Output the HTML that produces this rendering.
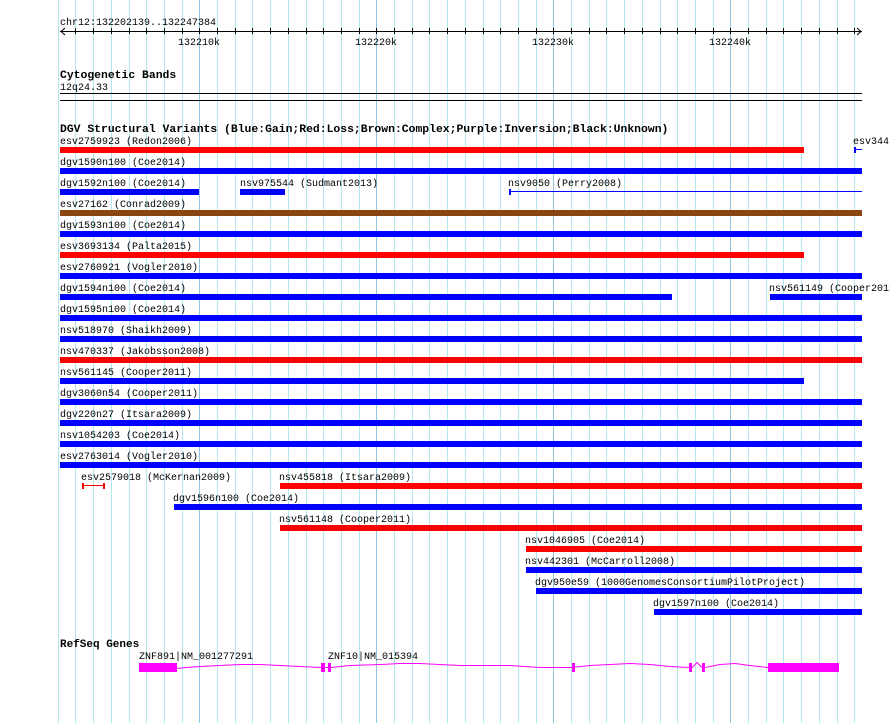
<!DOCTYPE html>
<html><head><meta charset="utf-8"><style>
html,body{margin:0;padding:0;background:#fff;}
svg{display:block}
text{font-family:"Liberation Mono",monospace;font-size:10px;fill:#000}
.b{font-weight:bold;font-size:11.4px}
</style></head><body>
<svg width="890" height="723" viewBox="0 0 890 723" xmlns="http://www.w3.org/2000/svg" shape-rendering="crispEdges">
<path stroke="#b0e8ee" stroke-width="1" fill="none" d="M58.5 0V723M75.5 0V723M93.5 0V723M111.5 0V723M129.5 0V723M146.5 0V723M164.5 0V723M182.5 0V723M217.5 0V723M235.5 0V723M252.5 0V723M270.5 0V723M288.5 0V723M306.5 0V723M323.5 0V723M341.5 0V723M359.5 0V723M394.5 0V723M412.5 0V723M429.5 0V723M447.5 0V723M465.5 0V723M483.5 0V723M500.5 0V723M518.5 0V723M536.5 0V723M571.5 0V723M589.5 0V723M606.5 0V723M624.5 0V723M642.5 0V723M660.5 0V723M677.5 0V723M695.5 0V723M713.5 0V723M748.5 0V723M766.5 0V723M783.5 0V723M801.5 0V723M819.5 0V723M837.5 0V723M854.5 0V723"/>
<path stroke="#90c4e0" stroke-width="1" fill="none" d="M199.5 0V723M376.5 0V723M553.5 0V723M730.5 0V723"/>
<path stroke="#000" stroke-width="1" fill="none" d="M75.5 28V34M93.5 28V34M111.5 28V34M129.5 28V34M146.5 28V34M164.5 28V34M182.5 28V34M199.5 28V34M217.5 28V34M235.5 28V34M252.5 28V34M270.5 28V34M288.5 28V34M306.5 28V34M323.5 28V34M341.5 28V34M359.5 28V34M376.5 28V34M394.5 28V34M412.5 28V34M429.5 28V34M447.5 28V34M465.5 28V34M483.5 28V34M500.5 28V34M518.5 28V34M536.5 28V34M553.5 28V34M571.5 28V34M589.5 28V34M606.5 28V34M624.5 28V34M642.5 28V34M660.5 28V34M677.5 28V34M695.5 28V34M713.5 28V34M730.5 28V34M748.5 28V34M766.5 28V34M783.5 28V34M801.5 28V34M819.5 28V34M837.5 28V34M854.5 28V34"/>
<text x="60" y="25">chr12:132202139..132247384</text>
<line x1="60" y1="31.5" x2="862" y2="31.5" stroke="#000"/>
<polyline points="65,28 61,31.5 65,35" fill="none" stroke="#000" shape-rendering="auto"/>
<polyline points="857,28 861,31.5 857,35" fill="none" stroke="#000" shape-rendering="auto"/>
<text x="199" y="45" text-anchor="middle">132210k</text>
<text x="376" y="45" text-anchor="middle">132220k</text>
<text x="553" y="45" text-anchor="middle">132230k</text>
<text x="730" y="45" text-anchor="middle">132240k</text>
<text class="b" x="60" y="78">Cytogenetic Bands</text>
<text x="60" y="90">12q24.33</text>
<rect x="60" y="93" width="802" height="1" fill="#000"/>
<rect x="60" y="100" width="802" height="1" fill="#000"/>
<text class="b" x="60" y="132">DGV Structural Variants (Blue:Gain;Red:Loss;Brown:Complex;Purple:Inversion;Black:Unknown)</text>
<g fill="#0000ff">
<rect x="60" y="168" width="802" height="6"/>
<rect x="60" y="189" width="139" height="6"/>
<rect x="240" y="189" width="45" height="6"/>
<rect x="509" y="189" width="2" height="6"/>
<rect x="509" y="191" width="353" height="1"/>
<rect x="854" y="147" width="2" height="6"/>
<rect x="854" y="149" width="8" height="1"/>
<rect x="60" y="231" width="802" height="6"/>
<rect x="60" y="273" width="802" height="6"/>
<rect x="60" y="294" width="612" height="6"/>
<rect x="770" y="294" width="92" height="6"/>
<rect x="60" y="315" width="802" height="6"/>
<rect x="60" y="336" width="802" height="6"/>
<rect x="60" y="378" width="744" height="6"/>
<rect x="60" y="399" width="802" height="6"/>
<rect x="60" y="420" width="802" height="6"/>
<rect x="60" y="441" width="802" height="6"/>
<rect x="60" y="462" width="802" height="6"/>
<rect x="174" y="504" width="688" height="6"/>
<rect x="526" y="567" width="336" height="6"/>
<rect x="536" y="588" width="326" height="6"/>
<rect x="654" y="609" width="208" height="6"/>
</g>
<g fill="#ff0000">
<rect x="60" y="147" width="744" height="6"/>
<rect x="60" y="252" width="744" height="6"/>
<rect x="60" y="357" width="802" height="6"/>
<rect x="82" y="483" width="2" height="6"/>
<rect x="103" y="483" width="2" height="6"/>
<rect x="82" y="485" width="22" height="1"/>
<rect x="280" y="483" width="582" height="6"/>
<rect x="280" y="525" width="582" height="6"/>
<rect x="526" y="546" width="336" height="6"/>
</g>
<rect x="60" y="210" width="802" height="6" fill="#8b4513"/>
<text x="60" y="144">esv2759923 (Redon2006)</text>
<text x="853" y="144">esv344</text>
<text x="60" y="165">dgv1590n100 (Coe2014)</text>
<text x="60" y="186">dgv1592n100 (Coe2014)</text>
<text x="240" y="186">nsv975544 (Sudmant2013)</text>
<text x="508" y="186">nsv9050 (Perry2008)</text>
<text x="60" y="207">esv27162 (Conrad2009)</text>
<text x="60" y="228">dgv1593n100 (Coe2014)</text>
<text x="60" y="249">esv3693134 (Palta2015)</text>
<text x="60" y="270">esv2760921 (Vogler2010)</text>
<text x="60" y="291">dgv1594n100 (Coe2014)</text>
<text x="769" y="291">nsv561149 (Cooper2011)</text>
<text x="60" y="312">dgv1595n100 (Coe2014)</text>
<text x="60" y="333">nsv518970 (Shaikh2009)</text>
<text x="60" y="354">nsv470337 (Jakobsson2008)</text>
<text x="60" y="375">nsv561145 (Cooper2011)</text>
<text x="60" y="396">dgv3060n54 (Cooper2011)</text>
<text x="60" y="417">dgv220n27 (Itsara2009)</text>
<text x="60" y="438">nsv1054203 (Coe2014)</text>
<text x="60" y="459">esv2763014 (Vogler2010)</text>
<text x="81" y="480">esv2579018 (McKernan2009)</text>
<text x="279" y="480">nsv455818 (Itsara2009)</text>
<text x="173" y="501">dgv1596n100 (Coe2014)</text>
<text x="279" y="522">nsv561148 (Cooper2011)</text>
<text x="525" y="543">nsv1046905 (Coe2014)</text>
<text x="525" y="564">nsv442301 (McCarroll2008)</text>
<text x="535" y="585">dgv950e59 (1000GenomesConsortiumPilotProject)</text>
<text x="653" y="606">dgv1597n100 (Coe2014)</text>
<text class="b" x="60" y="647" style="font-size:11px">RefSeq Genes</text>
<text x="139" y="659">ZNF891|NM_001277291</text>
<text x="328" y="659">ZNF10|NM_015394</text>
<polyline fill="none" stroke="#ff00ff" stroke-width="1" shape-rendering="auto" points="177,668.5 186,667.5 200,666.5 220,665.5 240,664.5 260,664.5 280,665.5 300,666.5 321,667.5 331,667.5 350,665.5 380,664.5 400,663.5 420,663.5 440,664.5 460,665.5 480,665.5 510,665.5 540,667.5 572,667.5 590,665.5 610,664.5 630,663.5 650,664.5 670,666.5 689,667.5 692,667.5 697,662.5 702,667.5 705,667.5 720,664.5 735,663.5 750,665.5 768,667.5"/>
<g fill="#ff00ff">
<rect x="139" y="663" width="38" height="9"/>
<rect x="321" y="663" width="4" height="9"/>
<rect x="328" y="663" width="3" height="9"/>
<rect x="572" y="663" width="3" height="9"/>
<rect x="689" y="663" width="3" height="9"/>
<rect x="702" y="663" width="3" height="9"/>
<rect x="768" y="663" width="71" height="9"/>
</g>
</svg>
</body></html>
